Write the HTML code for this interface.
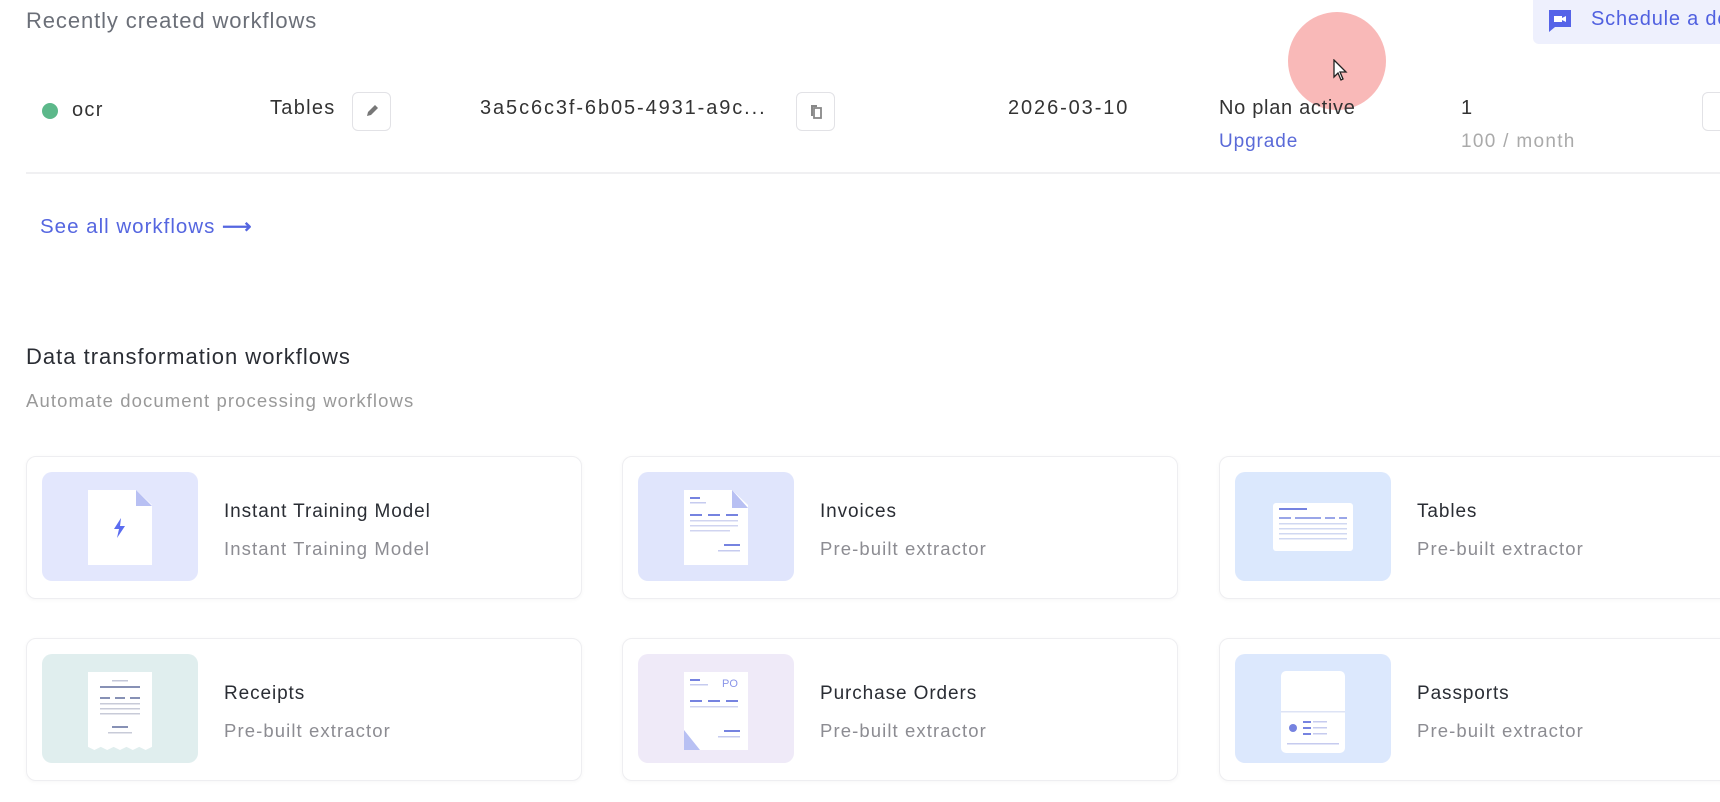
<!DOCTYPE html>
<html><head><meta charset="utf-8"><style>
*{margin:0;padding:0;box-sizing:border-box}
body{width:1720px;height:802px;overflow:hidden;background:#fff;font-family:"Liberation Sans",sans-serif;position:relative;color:#333}
.a{position:absolute;white-space:nowrap}
.r{letter-spacing:1.3px;font-size:20px}
.btn{position:absolute;border:1px solid #e2e2e6;border-radius:6px;background:#fff}
.card{position:absolute;width:556px;height:143px;border:1px solid #eeeef1;border-radius:10px;background:#fff;box-shadow:0 1px 4px rgba(0,0,0,.04)}
.ib{position:absolute;left:15px;top:15px;width:156px;height:109px;border-radius:10px}
.t{position:absolute;left:197px;top:44px;font-size:19px;letter-spacing:0.9px;color:#2a2d34;white-space:nowrap}
.s{position:absolute;left:197px;top:81px;font-size:18.5px;letter-spacing:1.1px;color:#8c8c92;white-space:nowrap}
.doc{position:absolute;background:#fff}
</style></head><body>
<div class="a" style="left:1288px;top:12px;width:98px;height:98px;border-radius:50%;background:#f9b9b8"></div>
<div class="a" style="left:26px;top:8px;font-size:22px;letter-spacing:0.9px;color:#6b6f78">Recently created workflows</div>
<div class="a" style="left:1533px;top:0;width:200px;height:44px;background:#eef0fd;border-radius:0 0 0 6px"></div>
<svg class="a" style="left:1546px;top:7px" width="28" height="28" viewBox="0 0 28 28"><path d="M3 3h22v17H9l-6 5z" fill="#5563e8"/><path d="M8 9h8v6H8zM16 11l4-2v6l-4-2z" fill="#fff"/></svg>
<div class="a" style="left:1591px;top:8px;font-size:20px;letter-spacing:0.8px;color:#5060e0">Schedule a demo</div>

<div class="a" style="left:42px;top:103px;width:16px;height:16px;border-radius:50%;background:#5cb88a"></div>
<div class="a r" style="left:72px;top:99px">ocr</div>
<div class="a r" style="left:270px;top:97px">Tables</div>
<div class="btn" style="left:352px;top:92px;width:39px;height:39px"><svg width="37" height="37" viewBox="0 0 37 37"><path d="M14 23l1-4 7-7 3 3-7 7z" fill="#777"/></svg></div>
<div class="a r" style="left:480px;top:97px;letter-spacing:1.9px">3a5c6c3f-6b05-4931-a9c...</div>
<div class="btn" style="left:796px;top:92px;width:39px;height:39px"><svg width="37" height="37" viewBox="0 0 37 37"><path d="M14 12h6v2h-4v9h-2z" fill="#888"/><rect x="17" y="15" width="7" height="10" fill="none" stroke="#888" stroke-width="1.8"/></svg></div>
<div class="a r" style="left:1008px;top:97px;letter-spacing:1.9px">2026-03-10</div>
<div class="a r" style="left:1219px;top:97px;letter-spacing:0.7px">No plan active</div>
<div class="a" style="left:1219px;top:131px;font-size:19px;letter-spacing:0.9px;color:#5a6ad8">Upgrade</div>
<div class="a r" style="left:1461px;top:97px">1</div>
<div class="a" style="left:1461px;top:131px;font-size:19px;letter-spacing:1.3px;color:#aaa">100 / month</div>
<div class="btn" style="left:1702px;top:92px;width:39px;height:39px"></div>
<div class="a" style="left:26px;top:172px;width:1700px;height:2px;background:#f0f0f2"></div>
<div class="a" style="left:40px;top:214px;font-size:20.5px;letter-spacing:1px;color:#5566e0">See all workflows <span style="font-weight:bold">⟶</span></div>

<svg class="a" style="left:1333px;top:59px" width="16" height="24" viewBox="0 0 16 24"><path d="M1 1v17l4-4 3 7 2-1-3-7h6z" fill="#fff" stroke="#222" stroke-width="1.3"/></svg>

<div class="a" style="left:26px;top:344px;font-size:22px;letter-spacing:1px;color:#2a2d34">Data transformation workflows</div>
<div class="a" style="left:26px;top:390px;font-size:18.5px;letter-spacing:1.1px;color:#999">Automate document processing workflows</div>

<div class="card" style="left:26px;top:456px"><div class="ib" style="background:#e3e7fd"><div class="doc" style="left:46px;top:18px;width:64px;height:75px;clip-path:polygon(0 0,75% 0,100% 20%,100% 100%,0 100%)"></div><div class="a" style="left:94px;top:18px;width:16px;height:16px;background:#b8c0f3;clip-path:polygon(0 0,100% 100%,0 100%)"></div><svg class="a" style="left:69px;top:45px" width="18" height="22" viewBox="0 0 18 22"><path d="M10 1L3 12h5l-2 9 8-12H9z" fill="#5b6cf0"/></svg></div><div class="t">Instant Training Model</div><div class="s">Instant Training Model</div></div>

<div class="card" style="left:622px;top:456px"><div class="ib" style="background:#e0e5fc"><div class="doc" style="left:46px;top:18px;width:64px;height:75px;clip-path:polygon(0 0,75% 0,100% 20%,100% 100%,0 100%)"></div><svg class="a" style="left:46px;top:18px" width="64" height="75"><rect x="6" y="7" width="10" height="2" fill="#7683e0"/><rect x="6" y="12" width="16" height="1.5" fill="#c6cbef"/><rect x="6" y="24" width="12" height="2" fill="#7683e0"/><rect x="24" y="24" width="12" height="2" fill="#7683e0"/><rect x="42" y="24" width="12" height="2" fill="#7683e0"/><rect x="6" y="30" width="48" height="1.5" fill="#d0d4f0"/><rect x="6" y="35" width="48" height="1.5" fill="#d0d4f0"/><rect x="6" y="40" width="40" height="1.5" fill="#d0d4f0"/><rect x="40" y="54" width="16" height="2" fill="#7683e0"/><rect x="34" y="60" width="22" height="1.5" fill="#c6cbef"/><path d="M48 0l16 18h-16z" fill="#b8c0f3"/></svg></div><div class="t">Invoices</div><div class="s">Pre-built extractor</div></div>

<div class="card" style="left:1219px;top:456px;width:560px"><div class="ib" style="background:#dbe8fd"><div class="doc" style="left:38px;top:31px;width:80px;height:48px;border-radius:3px"></div><svg class="a" style="left:38px;top:31px" width="80" height="48"><rect x="6" y="5" width="28" height="2" fill="#7683e0"/><g fill="#9aa6e8"><rect x="6" y="14" width="12" height="2"/><rect x="22" y="14" width="26" height="2"/><rect x="52" y="14" width="10" height="2"/><rect x="66" y="14" width="8" height="2"/></g><g fill="#d0d8f2"><rect x="6" y="20" width="68" height="1.5"/><rect x="6" y="25" width="68" height="1.5"/><rect x="6" y="30" width="68" height="1.5"/><rect x="6" y="35" width="68" height="1.5"/></g></svg></div><div class="t">Tables</div><div class="s">Pre-built extractor</div></div>

<div class="card" style="left:26px;top:638px"><div class="ib" style="background:#e0eeee"><div class="doc" style="left:46px;top:18px;width:64px;height:78px;clip-path:polygon(0 0,100% 0,100% 96%,90% 100%,80% 96%,70% 100%,60% 96%,50% 100%,40% 96%,30% 100%,20% 96%,10% 100%,0 96%)"></div><svg class="a" style="left:46px;top:18px" width="64" height="75"><rect x="24" y="8" width="16" height="1.5" fill="#c3c7d8"/><rect x="12" y="14" width="40" height="2" fill="#8791b5"/><g fill="#8791b5"><rect x="12" y="25" width="10" height="2"/><rect x="27" y="25" width="10" height="2"/><rect x="42" y="25" width="10" height="2"/></g><g fill="#c8cbd8"><rect x="12" y="31" width="40" height="1.5"/><rect x="12" y="36" width="40" height="1.5"/><rect x="12" y="41" width="40" height="1.5"/></g><rect x="24" y="54" width="16" height="2" fill="#8791b5"/><rect x="20" y="60" width="24" height="1.5" fill="#c8cbd8"/></svg></div><div class="t">Receipts</div><div class="s">Pre-built extractor</div></div>

<div class="card" style="left:622px;top:638px"><div class="ib" style="background:#efeaf8"><div class="doc" style="left:46px;top:18px;width:64px;height:78px"></div><svg class="a" style="left:46px;top:18px" width="64" height="78"><rect x="6" y="7" width="10" height="2" fill="#7683e0"/><rect x="6" y="12" width="18" height="1.5" fill="#c6cbef"/><text x="38" y="15" font-size="11" fill="#8a95e8" font-family="Liberation Sans">PO</text><g fill="#7683e0"><rect x="6" y="28" width="12" height="2"/><rect x="24" y="28" width="12" height="2"/><rect x="42" y="28" width="12" height="2"/></g><rect x="6" y="34" width="48" height="1.5" fill="#d0d4f0"/><rect x="40" y="58" width="16" height="2" fill="#7683e0"/><rect x="34" y="64" width="22" height="1.5" fill="#c6cbef"/><path d="M0 58l16 20h-16z" fill="#b8c0f3"/></svg></div><div class="t">Purchase Orders</div><div class="s">Pre-built extractor</div></div>

<div class="card" style="left:1219px;top:638px;width:560px"><div class="ib" style="background:#dce8fd"><div class="doc" style="left:46px;top:17px;width:64px;height:82px;border-radius:5px"></div><svg class="a" style="left:46px;top:17px" width="64" height="82"><rect x="0" y="40" width="64" height="1.5" fill="#dde3f5"/><circle cx="12" cy="57" r="4" fill="#7683e0"/><g fill="#7683e0"><rect x="22" y="50" width="8" height="2"/><rect x="22" y="56" width="8" height="2"/><rect x="22" y="62" width="8" height="2"/></g><g fill="#c6cbef"><rect x="32" y="50" width="14" height="1.5"/><rect x="32" y="56" width="14" height="1.5"/><rect x="32" y="62" width="14" height="1.5"/></g><rect x="6" y="72" width="52" height="1.5" fill="#c6cbef"/></svg></div><div class="t">Passports</div><div class="s">Pre-built extractor</div></div>
</body></html>
